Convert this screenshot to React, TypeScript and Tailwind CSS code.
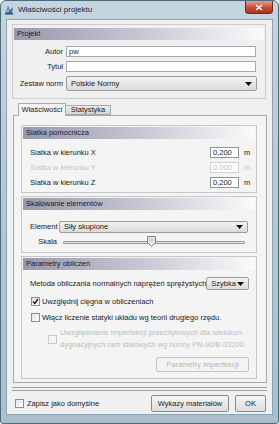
import React from "react";

function Header({ children }: { children: React.ReactNode }) {
  return (
    <div className="h-[12px] flex items-center pl-[3px] bg-gradient-to-r from-[#9898ac] via-[#c6c6d3] to-[#fbfbfc] text-[#1c1c28] leading-none">
      {children}
    </div>
  );
}

function Arrow() {
  return (
    <svg width="7" height="4" viewBox="0 0 7 4" className="shrink-0">
      <polygon points="0,0 7,0 3.5,4" fill="#111" />
    </svg>
  );
}

function Combo({ text, className }: { text: string; className: string }) {
  return (
    <div
      className={
        "border border-[#9c9c9c] rounded-[2px] bg-gradient-to-b from-[#f3f3f3] to-[#dadada] flex items-center pl-[4px] pr-[4px] leading-none " +
        className
      }
    >
      <span className="flex-1">{text}</span>
      <Arrow />
    </div>
  );
}

function Check({ checked, disabled }: { checked?: boolean; disabled?: boolean }) {
  return (
    <div
      className={
        "w-[9px] h-[9px] shrink-0 border flex items-center justify-center " +
        (disabled ? "border-[#c8c8c8] bg-[#f4f4f4]" : "border-[#8e8f8f] bg-gradient-to-br from-[#e4e4e4] to-[#fdfdfd]")
      }
    >
      {checked && (
        <svg width="7" height="7" viewBox="0 0 7 7">
          <path d="M1 3.5 L2.8 5.5 L6 1" stroke="#1a1a1a" strokeWidth="1.4" fill="none" />
        </svg>
      )}
    </div>
  );
}

function NumInput({ value, disabled }: { value: string; disabled?: boolean }) {
  return (
    <div
      className={
        "w-[29px] h-[11px] border bg-white flex items-center pl-[2px] leading-none " +
        (disabled ? "border-[#d0d0d0] text-[#c0c0c0]" : "border-[#8f949c] text-[#1a1a1a]")
      }
    >
      {value}
    </div>
  );
}

function GridRow({ label, value, disabled }: { label: string; value: string; disabled?: boolean }) {
  return (
    <div className="h-[11px] flex items-center pl-[7px] pr-[3px]">
      <span className={"flex-1 " + (disabled ? "text-[#c4c4c4]" : "")}>{label}</span>
      <NumInput value={value} disabled={disabled} />
      <span className={"w-[13px] pl-[5px] " + (disabled ? "text-[#c4c4c4]" : "")}>m</span>
    </div>
  );
}

export default function App() {
  return (
    <div className="w-[279px] h-[424px] overflow-hidden rounded-t-[6px] rounded-b-[3px] border border-[#4f6b7a] bg-gradient-to-b from-[#c4d5df] via-[#b3c8d3] to-[#a9bfcb] flex flex-col font-['Liberation_Sans',Arial,sans-serif] text-[7.5px] text-[#1a1a1a]">
      {/* title bar */}
      <div className="h-[18px] shrink-0 relative flex items-center pl-[3px]">
        <svg width="10" height="10" viewBox="0 0 10 10" className="shrink-0">
          <polygon points="1,9 4,1 6,5 9,2 8,9" fill="#4a6fa8" />
          <polygon points="2,8 4,3 5.5,6" fill="#9fb9dc" />
          <rect x="1" y="8" width="8" height="1.5" fill="#2c4a78" />
        </svg>
        <span className="ml-[4px] text-[8px] text-[#1b2229]">Właściwości projektu</span>
        <div className="absolute right-[5px] top-[-1px] w-[28px] h-[14px] rounded-b-[3px] border border-[#6d2a22] bg-gradient-to-b from-[#e4a08f] via-[#c8503a] to-[#b0301e] flex items-center justify-center">
          <svg width="8" height="7" viewBox="0 0 8 7">
            <path d="M1 1 L7 6 M7 1 L1 6" stroke="#fff" strokeWidth="1.6" />
          </svg>
        </div>
      </div>

      {/* content */}
      <div className="mx-[5px] h-[396px] bg-[#f0f0f0] border border-[#8ca3b1] flex flex-col">
        {/* Projekt panel */}
        <div className="mt-[4px] ml-[5px] w-[254px] h-[75px] border border-[#cdcdcd] px-[1px] pt-[3px] flex flex-col">
          <Header>Projekt</Header>
          <div className="mt-[6px] h-[11px] flex items-center pr-[8px]">
            <span className="w-[49px] text-right pr-[0px]">Autor</span>
            <div className="ml-[3px] flex-1 h-[11px] border border-[#a6a9b0] bg-white flex items-center pl-[2px] leading-none">pw</div>
          </div>
          <div className="mt-[4px] h-[11px] flex items-center pr-[8px]">
            <span className="w-[49px] text-right">Tytuł</span>
            <div className="ml-[3px] flex-1 h-[11px] border border-[#a6a9b0] bg-white" />
          </div>
          <div className="mt-[4px] h-[15px] flex items-center pr-[7px]">
            <span className="w-[49px] text-right">Zestaw norm</span>
            <Combo text="Polskie Normy" className="ml-[3px] flex-1 h-[15px]" />
          </div>
        </div>

        {/* tabs */}
        <div className="mt-[4px] ml-[11px] h-[12px] flex items-end relative z-10">
          <div className="w-[48px] h-[13px] -mb-[1px] border border-b-0 border-[#a9a9a9] bg-[#f4f4f4] flex items-center justify-center leading-none">
            Właściwości
          </div>
          <div className="w-[45px] h-[10px] border border-l-0 border-[#a9a9a9] bg-gradient-to-b from-[#ececec] to-[#d6d6d6] flex items-center justify-center leading-none">
            Statystyka
          </div>
        </div>

        {/* tab panel */}
        <div className="ml-[6px] w-[254px] h-[268px] border border-[#a9a9a9] bg-[#f4f4f4] pl-[7px] pr-[9px] pt-[9px] flex flex-col">
          {/* Siatka pomocnicza */}
          <div className="h-[68px] border border-[#c6c6c6] px-[1px] pt-[1px] flex flex-col">
            <Header>Siatka pomocnicza</Header>
            <div className="mt-[8px] flex flex-col gap-[4px]">
              <GridRow label="Siatka w kierunku X" value="0,200" />
              <GridRow label="Siatka w kierunku Y" value="0,000" disabled />
              <GridRow label="Siatka w kierunku Z" value="0,200" />
            </div>
          </div>

          {/* Skalowanie */}
          <div className="mt-[3px] h-[57px] border border-[#c6c6c6] px-[1px] pt-[1px] flex flex-col">
            <Header>Skalowanie elementów</Header>
            <div className="mt-[11px] h-[12px] flex items-center pl-[7px] pr-[7px]">
              <span className="w-[29px]">Element</span>
              <Combo text="Siły skupione" className="flex-1 h-[12px]" />
            </div>
            <div className="mt-[3px] h-[12px] flex items-center pl-[7px] pr-[10px]">
              <span className="w-[27px] text-right">Skala</span>
              <div className="ml-[6px] flex-1 h-[12px] relative flex items-center">
                <div className="w-full h-[3px] border border-[#9a9a9a] bg-[#e2e2e2] rounded-[1px]" />
                <svg width="9" height="11" viewBox="0 0 9 11" className="absolute left-[84px] top-[0px]">
                  <path d="M0.5 0.5 H8.5 V6.5 L4.5 10.5 L0.5 6.5 Z" fill="#ececec" stroke="#7c7c7c" />
                  <path d="M2 3 H7 M2 5 H7" stroke="#b8b8b8" />
                </svg>
              </div>
            </div>
          </div>

          {/* Parametry obliczen */}
          <div className="mt-[3px] h-[123px] border border-[#c6c6c6] px-[1px] pt-[1px] flex flex-col">
            <Header>Parametry obliczeń</Header>
            <div className="mt-[7px] h-[13px] flex items-center pl-[7px] pr-[6px]">
              <span className="flex-1 whitespace-nowrap">Metoda obliczania normalnych naprężeń sprężystych</span>
              <Combo text="Szybka" className="w-[48px] h-[13px]" />
            </div>
            <div className="mt-[7px] h-[9px] flex items-center pl-[8px] gap-[2px]">
              <Check checked />
              <span>Uwzględnij cięgna w obliczeniach</span>
            </div>
            <div className="mt-[7px] h-[9px] flex items-center pl-[8px] gap-[2px]">
              <Check />
              <span>Włącz liczenie statyki układu wg teorii drugiego rzędu.</span>
            </div>
            <div className="mt-[5px] flex items-center pl-[25px] gap-[3px] text-[#bdbdbd]">
              <Check disabled />
              <div className="leading-[12px]">
                <div>Uwzględnianie imperfekcji przechyłowych dla wielokon-</div>
                <div>dygnacyjnych ram stalowych wg normy PN-90/B-03200</div>
              </div>
            </div>
            <div className="mt-[6px] flex justify-end pr-[6px]">
              <div className="w-[93px] h-[15px] border border-[#c4c4c4] rounded-[2px] bg-[#f4f4f4] text-[#b4b4b4] flex items-center justify-center leading-none">
                Parametry imperfekcji
              </div>
            </div>
          </div>
        </div>

        {/* separator */}
        <div className="mt-[4px] mx-[5px] h-[4px] border-t border-b border-[#a0a0a0]" />

        {/* bottom row */}
        <div className="mt-[4px] h-[17px] flex items-center pl-[8px] pr-[6px]">
          <Check />
          <span className="ml-[3px] flex-1">Zapisz jako domyślne</span>
          <div className="w-[78px] h-[17px] border border-[#8a8a8a] rounded-[2px] bg-gradient-to-b from-[#f6f6f6] to-[#dedede] flex items-center justify-center leading-none">
            Wykazy materiałów
          </div>
          <div className="ml-[6px] w-[31px] h-[17px] border border-[#8a8a8a] rounded-[2px] bg-gradient-to-b from-[#f6f6f6] to-[#dedede] flex items-center justify-center leading-none">
            OK
          </div>
        </div>
      </div>
    </div>
  );
}
